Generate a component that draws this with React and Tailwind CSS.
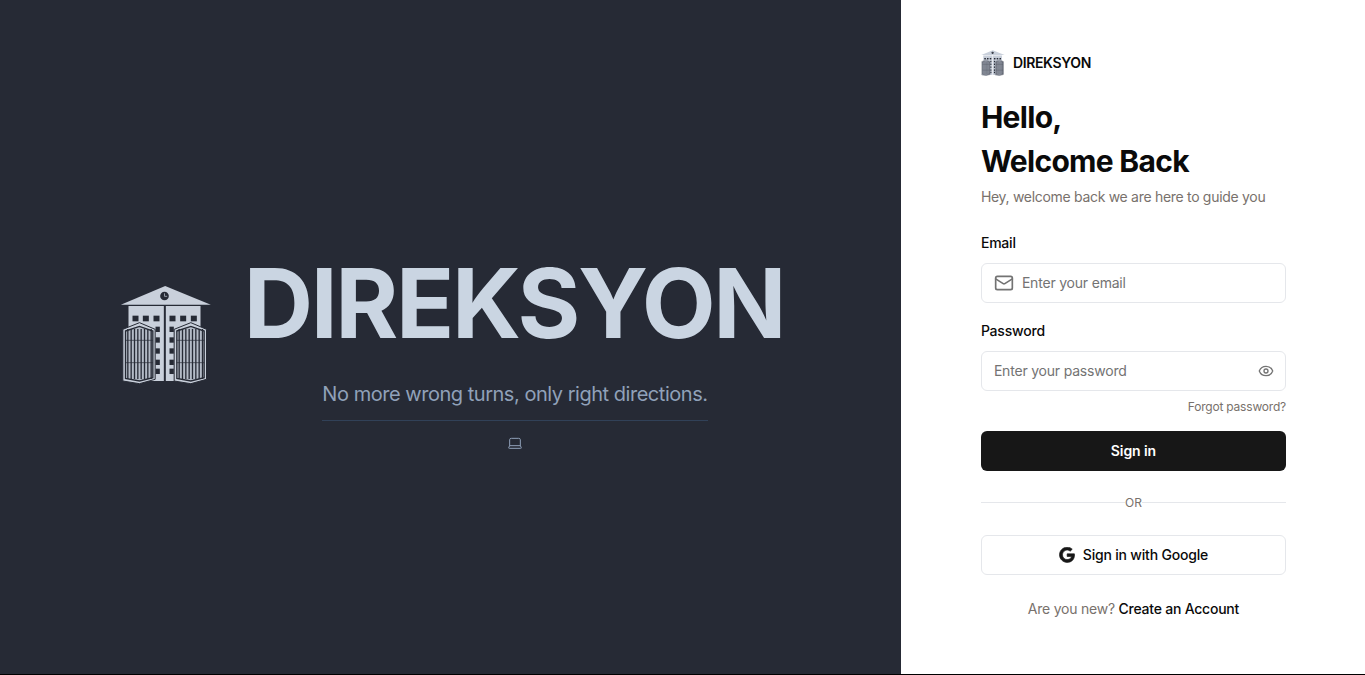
import { Eye, Laptop, Mail } from "lucide-react";

function Logo({ className }) {
    const bars = [];
    for (let x = 0; x < 8; x++) bars.push(x);
    const door = (x0) => (
        <g key={x0}>
            <path
                d={`M${x0} 205 L${x0 + 50} 185 L${x0 + 97} 205 V355 L${x0 + 50} 368 L${x0} 360 Z`}
                fill="#c9d0db"
                stroke="#262a35"
                strokeWidth="3"
            />
            <path
                d={`M${x0 + 8} 210 L${x0 + 50} 196 L${x0 + 90} 210 V350 L${x0 + 50} 360 L${x0 + 8} 352 Z`}
                fill="#b4bbc7"
                stroke="#262a35"
                strokeWidth="4"
            />
            {bars.map((b) => (
                <line
                    key={b}
                    x1={x0 + 15 + b * 10}
                    x2={x0 + 15 + b * 10}
                    y1="204"
                    y2="354"
                    stroke="#262a35"
                    strokeWidth="4"
                />
            ))}
            <line x1={x0 + 8} x2={x0 + 90} y1="238" y2="238" stroke="#262a35" strokeWidth="2" />
            <line x1={x0 + 8} x2={x0 + 90} y1="305" y2="305" stroke="#262a35" strokeWidth="2" />
        </g>
    );
    const top = [97, 128, 160, 208, 240, 272];
    const side = [197, 229, 262, 296, 323];
    return (
        <svg viewBox="60 72 275 300" className={className}>
            <path d="M62 131 L195 75 L332 131 Z" fill="#c9d0db" />
            <circle cx="193" cy="105" r="13" fill="#262a35" />
            <path d="M193 97 V106 H201" stroke="#c9d0db" strokeWidth="2" fill="none" />
            <rect x="85" y="135" width="106" height="225" fill="#c9d0db" />
            <rect x="197" y="135" width="104" height="225" fill="#c9d0db" />
            {top.map((x) => (
                <rect key={x} x={x} y="164" width="18" height="17" fill="#262a35" />
            ))}
            {side.map((y) => (
                <g key={y}>
                    <rect x="166" y={y} width="13" height="16" fill="#262a35" />
                    <rect x="208" y={y} width="13" height="16" fill="#262a35" />
                </g>
            ))}
            {door(68)}
            {door(222)}
        </svg>
    );
}

function GoogleIcon() {
    return (
        <svg viewBox="0 0 24 24" className="w-4 h-4" fill="#171717" stroke="#171717" strokeWidth="1">
            <path d="M12.24 10.29v3.9h6.45c-.28 1.6-1.87 4.7-6.45 4.7-3.88 0-7.05-3.22-7.05-7.19s3.17-7.19 7.05-7.19c2.21 0 3.69.94 4.54 1.75l3.09-2.98C17.88 1.42 15.3.3 12.24.3 5.9.3.75 5.45.75 11.7s5.15 11.4 11.49 11.4c6.63 0 11.03-4.66 11.03-11.22 0-.75-.08-1.33-.18-1.59H12.24z" />
        </svg>
    );
}

export default function App() {
    return (
        <div className="h-screen bg-black pb-px font-['Inter',sans-serif] overflow-hidden">
            <div className="flex h-full">
                <div className="w-[66%] bg-[#262a35] flex flex-col items-center justify-center pt-[32px]">
                    <div className="flex items-start gap-8 ml-[3px]">
                        <Logo className="w-[92px] h-[100px] mt-[30px] -mb-[34px]" />
                        <h1 className="text-[96px] leading-none font-bold text-slate-300 tracking-[-2.4px]">DIREKSYON</h1>
                    </div>
                    <div className="mt-[29px] flex flex-col items-center ml-[129px]">
                        <p className="text-xl leading-7 text-slate-400 pb-3 border-b border-slate-700 tracking-[-0.47px]">
                            No more wrong turns, only right directions.
                        </p>
                        <Laptop className="w-4 h-4 mt-[14px] text-slate-400" strokeWidth={1.5} />
                    </div>
                </div>
                <div className="w-[34%] bg-white pl-20 pr-[79px] pt-[50px]">
                    <div className="flex items-center gap-2">
                        <Logo className="w-6 h-[26px]" />
                        <span className="text-sm font-semibold text-[#0a0a0a] tracking-[-0.35px]">DIREKSYON</span>
                    </div>
                    <h2 className="mt-[19px] text-[30px] leading-[44px] font-bold text-[#0a0a0a] tracking-[-0.7px]">
                        Hello,
                        <br />
                        Welcome Back
                    </h2>
                    <p className="mt-[4px] text-sm leading-5 text-[#78716c] tracking-[-0.3px]">Hey, welcome back we are here to guide you</p>

                    <label className="block mt-[26px] text-sm leading-5 font-medium text-[#0a0a0a] tracking-[-0.2px]">Email</label>
                    <div className="mt-[10px] h-10 flex items-center gap-2 px-3 border border-gray-200 rounded-md">
                        <Mail className="w-5 h-5 text-[#737373]" strokeWidth={2} />
                        <span className="text-sm text-[#737373] tracking-[-0.2px]">Enter your email</span>
                    </div>

                    <label className="block mt-[18px] text-sm leading-5 font-medium text-[#0a0a0a] tracking-[-0.2px]">Password</label>
                    <div className="mt-[10px] h-10 flex items-center justify-between pl-3 pr-[11px] border border-gray-200 rounded-md">
                        <span className="text-sm text-[#737373] tracking-[-0.2px]">Enter your password</span>
                        <Eye className="w-4 h-4 text-[#737373]" />
                    </div>
                    <div className="mt-2 text-right text-xs leading-4 text-[#78716c] tracking-[-0.2px]">Forgot password?</div>

                    <button className="mt-4 w-full h-10 rounded-md bg-[#171717] text-white text-sm font-semibold tracking-[-0.1px]">
                        Sign in
                    </button>

                    <div className="mt-[24px] flex items-center">
                        <div className="flex-1 h-px mb-px bg-gray-200" />
                        <span className="text-xs leading-4 text-[#78716c]">OR</span>
                        <div className="flex-1 h-px mb-px bg-gray-200" />
                    </div>

                    <button className="mt-6 w-full h-10 flex items-center justify-center gap-2 rounded-md border border-gray-200 text-sm font-medium text-[#0a0a0a] tracking-[-0.2px]">
                        <GoogleIcon />
                        Sign in with Google
                    </button>

                    <p className="mt-6 text-center text-sm leading-5 text-[#78716c] tracking-[-0.23px]">
                        Are you new? <span className="font-medium text-[#0a0a0a]">Create an Account</span>
                    </p>
                </div>
            </div>
        </div>
    );
}
